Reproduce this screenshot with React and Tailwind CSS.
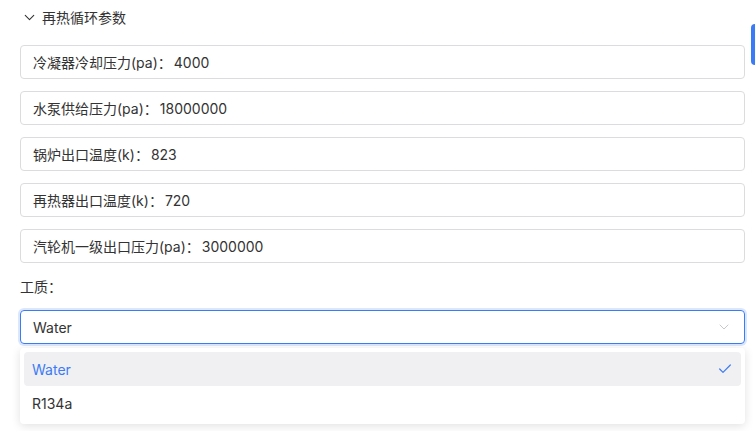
import { ChevronDown, Check } from 'lucide-react';

const fields = [
  { label: '冷凝器冷却压力(pa)：', value: '4000' },
  { label: '水泵供给压力(pa)：', value: '18000000' },
  { label: '锅炉出口温度(k)：', value: '823' },
  { label: '再热器出口温度(k)：', value: '720' },
  { label: '汽轮机一级出口压力(pa)：', value: '3000000' },
];

const options = ['Water', 'R134a'];

const App = () => {
  const selected = 'Water';

  return (
    <div
      className="relative w-[755px] h-[431px] overflow-hidden bg-white text-[14px] text-[#333]"
      style={{ fontFamily: 'Inter, "Noto Sans CJK SC", sans-serif' }}
    >
      {/* scrollbar thumb */}
      <div className="absolute right-0 top-[24px] w-[4px] h-[41px] rounded-l bg-[#3b7bf6]" />

      <div className="pl-[20px] pr-[10px]">
        <div className="flex items-center h-[35px] gap-[4px] pl-[1px]">
          <ChevronDown size={17} strokeWidth={1.5} className="text-[#333]" />
          <span>再热循环参数</span>
        </div>

        <div className="flex flex-col gap-[12px] mt-[10px]">
          {fields.map((f) => (
            <div
              key={f.label}
              className="flex items-center h-[34px] px-[12px] border border-[#dcdcdf] rounded-[4px]"
            >
              <span>{f.label}</span>
              <span className="ml-[2px]">{f.value}</span>
            </div>
          ))}
        </div>

        <div className="mt-[12px] h-[22px] flex items-center">工质：</div>

        <div className="mt-[13px] relative">
          <div className="flex items-center justify-between h-[34px] px-[12px] border border-[#3b7bf6] rounded-[4px] shadow-[0_0_0_2px_#dbe7fd]">
            <span>{selected}</span>
            <ChevronDown size={16} strokeWidth={1.5} className="text-[#c8c8cc]" />
          </div>

          <div className="absolute left-0 right-0 top-[38px] bg-white rounded-[4px] shadow-[0_2px_10px_rgba(0,0,0,0.12)] p-[4px]">
            {options.map((o) => (
              <div
                key={o}
                className={`flex items-center justify-between h-[34px] px-[8px] rounded-[4px] ${
                  o === selected ? 'bg-[#f0f0f2] text-[#3b7bf6]' : ''
                }`}
              >
                <span>{o}</span>
                {o === selected && <Check size={16} strokeWidth={1.8} className="text-[#3b7bf6]" />}
              </div>
            ))}
          </div>
        </div>
      </div>
    </div>
  );
};

export default App;
